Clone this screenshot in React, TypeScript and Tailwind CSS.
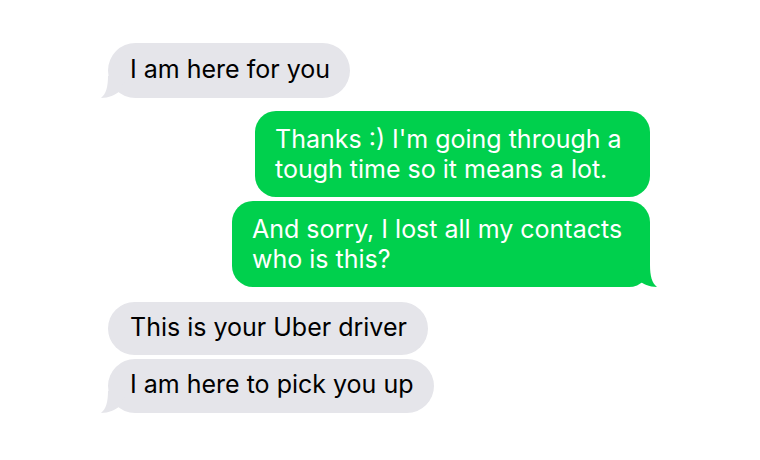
import React from 'react';

type Msg = {
  from: 'me' | 'them';
  lines: string[];
  size: string;
  tail?: boolean;
  gap: string;
};

const messages: Msg[] = [
  { from: 'them', lines: ['I am here for you'], size: 'w-[242px] h-[55px]', tail: true, gap: 'mt-0' },
  { from: 'me', lines: ["Thanks :) I'm going through a", 'tough time so it means a lot.'], size: 'w-[395px] h-[86px]', gap: 'mt-[13px]' },
  { from: 'me', lines: ['And sorry, I lost all my contacts', 'who is this?'], size: 'w-[418px] h-[86px]', tail: true, gap: 'mt-[4px]' },
  { from: 'them', lines: ['This is your Uber driver'], size: 'w-[320px] h-[53px]', gap: 'mt-[15px]' },
  { from: 'them', lines: ['I am here to pick you up'], size: 'w-[326px] h-[54px]', tail: true, gap: 'mt-[4px]' },
];

const TailLeft = () => (
  <svg className="absolute -left-[7px] bottom-0" width="26" height="22" viewBox="0 0 26 22">
    <path d="M7 0 C7 11 5 18 0 22 C8 22 14 19 19 15 L26 0 Z" fill="#e5e5ea" />
  </svg>
);

const TailRight = () => (
  <svg className="absolute -right-[7px] bottom-0" width="26" height="22" viewBox="0 0 26 22">
    <path d="M19 0 C19 11 21 18 26 22 C18 22 12 19 7 15 L0 0 Z" fill="#00d04d" />
  </svg>
);

const Bubble: React.FC<{ msg: Msg }> = ({ msg }) => {
  const mine = msg.from === 'me';
  return (
    <div className={`flex ${mine ? 'justify-end' : 'justify-start'} ${msg.gap}`}>
      <div
        className={`relative flex flex-col justify-center ${msg.size} ${
          mine
            ? 'bg-[#00d04d] text-white rounded-[21px] pl-[20px]'
            : 'bg-[#e5e5ea] text-black rounded-[28px] pl-[22px] pb-[4px]'
        } text-[25px] leading-[30px]`}
      >
        {msg.lines.map((l, i) => (
          <div key={i} className="relative whitespace-nowrap">{l}</div>
        ))}
        {msg.tail && (mine ? <TailRight /> : <TailLeft />)}
      </div>
    </div>
  );
};

export default function App() {
  return (
    <div
      className="w-[760px] h-[460px] bg-white pt-[43px] pl-[108px] pr-[110px]"
      style={{ fontFamily: 'Inter, "Liberation Sans", sans-serif' }}
    >
      {messages.map((m, i) => (
        <Bubble key={i} msg={m} />
      ))}
    </div>
  );
}
